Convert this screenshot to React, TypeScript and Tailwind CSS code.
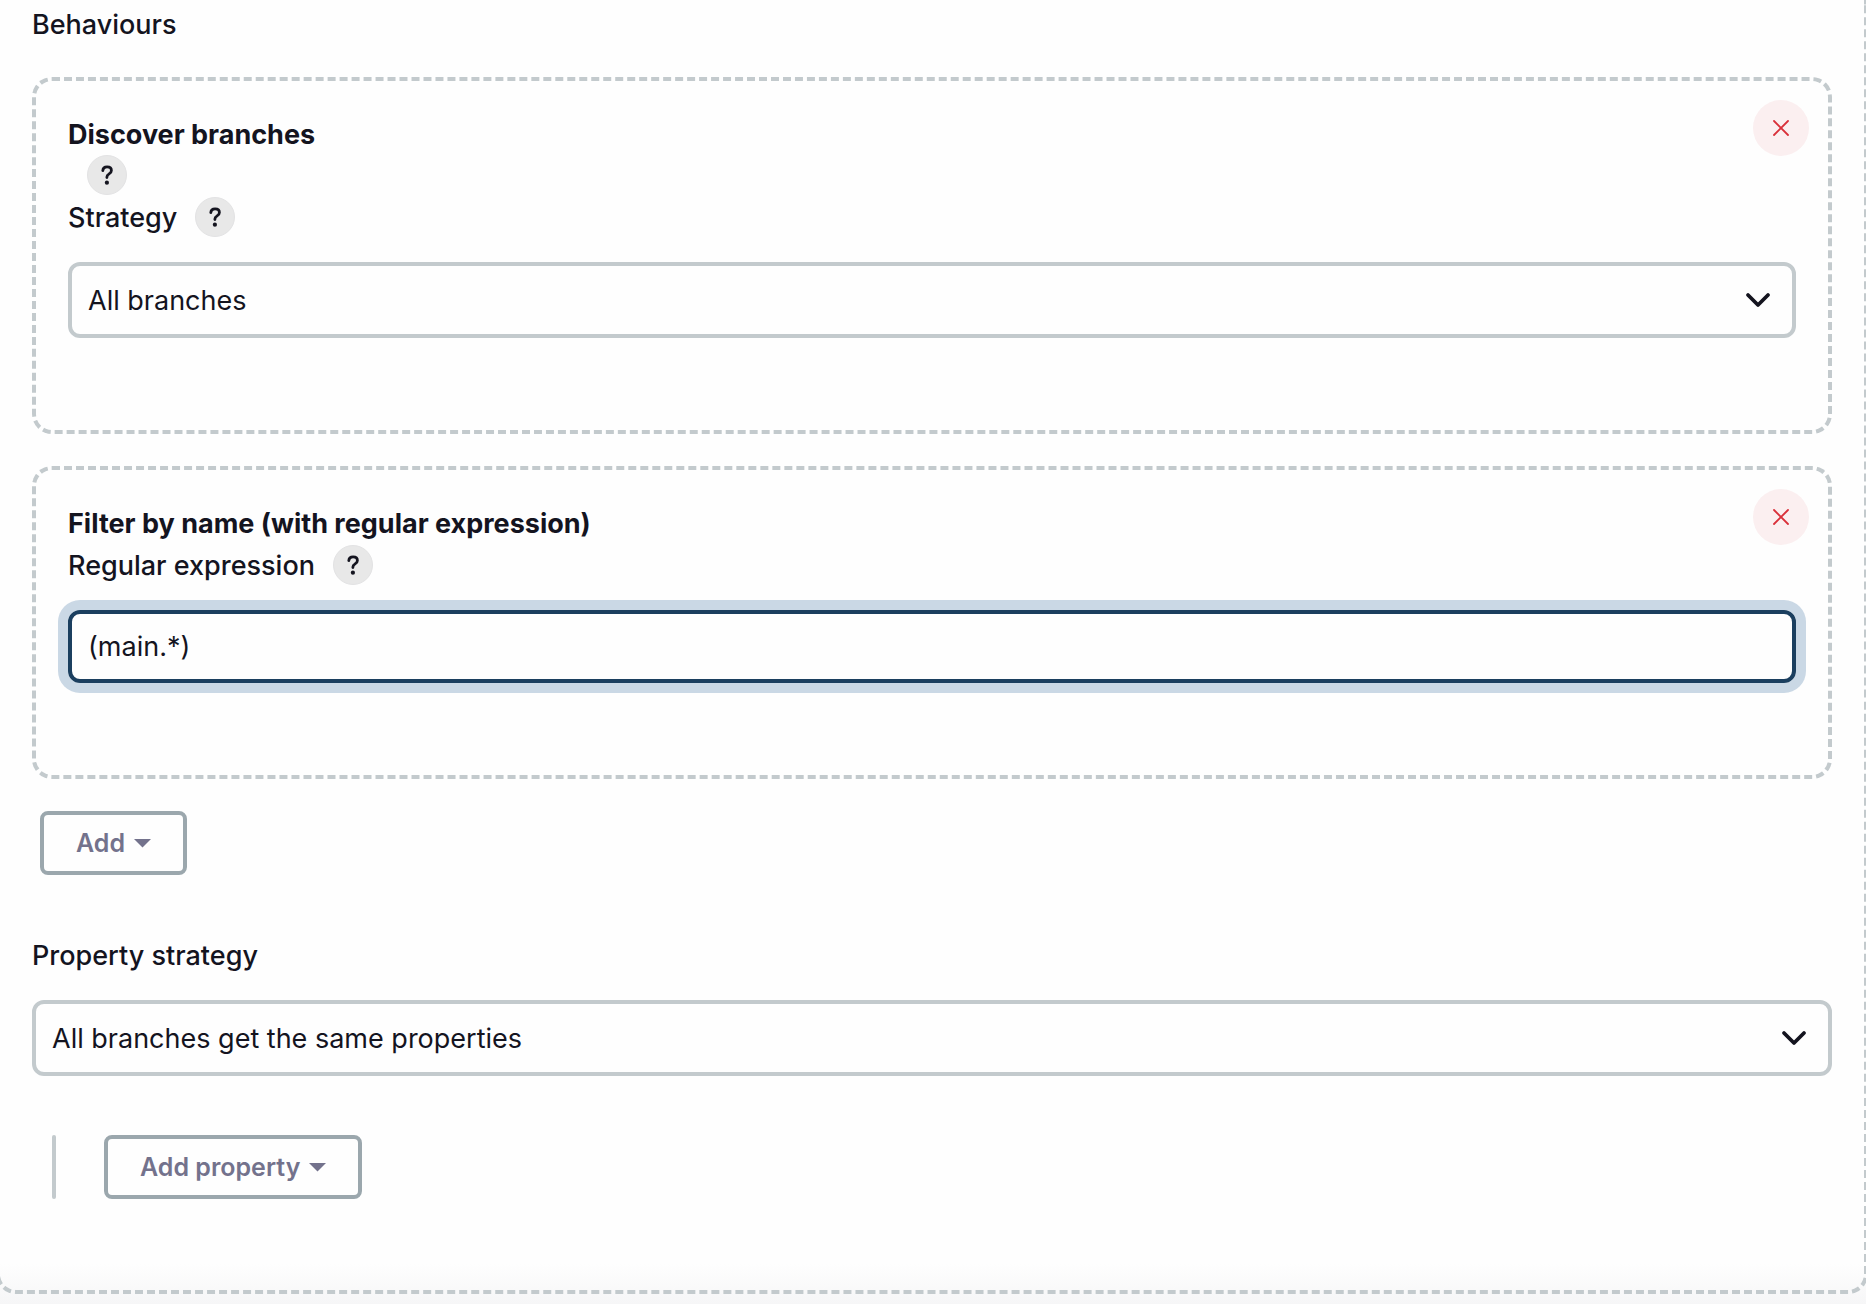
import { ReactNode, useState } from "react";

interface HelpButtonProps {
  topic: string;
}

function HelpButton({ topic }: HelpButtonProps) {
  return (
    <button
      type="button"
      aria-label={`Help for ${topic}`}
      className="flex size-10 shrink-0 items-center justify-center rounded-full border border-[#e3e3e4] bg-[#e8e8e8] text-[#14141f]"
    >
      <svg width="20" height="20" viewBox="0 0 20 20" fill="none">
        <path d="M5.800 5.600C6 3 7.600 1.800 10.100 1.800c2.500 0 4.300 1.400 4.300 3.600 0 1.700-.9 2.600-2.300 3.500-1.600 1-2.200 1.700-2.200 3v.6" stroke="currentColor" strokeWidth="2.800" strokeLinecap="round" />
        <circle cx="9.900" cy="17.700" r="2.100" fill="currentColor" />
      </svg>
    </button>
  );
}

interface LabelRowProps {
  htmlFor: string;
  children: string;
  help?: boolean;
}

function LabelRow({ htmlFor, children, help = false }: LabelRowProps) {
  return (
    <div className="flex h-[42px] items-center gap-[18px]">
      <label htmlFor={htmlFor} className="pt-0.5 font-medium">{children}</label>
      {help && <HelpButton topic={children} />}
    </div>
  );
}

interface SelectFieldProps {
  id: string;
  options: string[];
}

function SelectField({ id, options }: SelectFieldProps) {
  const [value, setValue] = useState(options[0]);

  return (
    <div className="relative mt-6">
      <select
        id={id}
        value={value}
        onChange={(e) => setValue(e.target.value)}
        className="block h-[76px] w-full appearance-none rounded-xl border-4 border-[#c3cacd] bg-transparent pt-0.5 pr-16 pl-4 outline-none"
      >
        {options.map((option) => (
          <option key={option}>{option}</option>
        ))}
      </select>
      <svg className="pointer-events-none absolute inset-y-0 right-6 my-auto" width="28" height="20" viewBox="0 0 28 20" fill="none">
        <path d="M4 5l10 10L24 5" stroke="#14141f" strokeWidth="3.800" strokeLinecap="round" strokeLinejoin="round" />
      </svg>
    </div>
  );
}

interface BehaviourProps {
  title: string;
  children: ReactNode;
}

function Behaviour({ title, children }: BehaviourProps) {
  return (
    <section className="relative mb-8 rounded-[20px] border-4 border-dashed border-[#c3cacd] px-8 pt-[34px] pb-[92px]">
      <button
        type="button"
        aria-label={`Remove ${title}`}
        className="absolute top-[19px] right-[19px] flex size-14 items-center justify-center rounded-full bg-[#fbeff0] text-[#d9303a]"
      >
        <svg width="16" height="16" viewBox="0 0 16 16" fill="none" stroke="currentColor" strokeWidth="1.800" strokeLinecap="round">
          <path d="M1 1l14 14M15 1L1 15" />
        </svg>
      </button>
      <h2 className="leading-10 font-bold">{title}</h2>
      {children}
    </section>
  );
}

interface MenuButtonProps {
  children: string;
}

function MenuButton({ children }: MenuButtonProps) {
  return (
    <button type="button" className="flex h-16 items-center gap-[9px] rounded-lg border-4 border-[#9ba7ad] px-8 text-[25px] font-semibold text-[#73728c]">
      {children}
      <svg width="17" height="9" viewBox="0 0 17 9" fill="currentColor">
        <path d="M0 0h17L8.500 8.500z" />
      </svg>
    </button>
  );
}

export default function App() {
  const [regex, setRegex] = useState("(main.*)");

  return (
    <main className="overflow-hidden bg-linear-to-t from-[#f6f6f7] to-[#fefefe] to-[40px] pb-[10px] font-['Inter',sans-serif] text-[27px] leading-[42px] text-[#14141f]">
      <div className="-mr-[2px] -ml-1 rounded-b-[20px] border-4 border-t-0 border-dashed border-[#c3cacd] px-8 pt-1 pb-[91px]">
        <h1 className="mb-[31px] font-medium">Behaviours</h1>

        <Behaviour title="Discover branches">
          <div className="mb-px pl-[19px]">
            <HelpButton topic="Discover branches" />
          </div>
          <LabelRow htmlFor="strategy" help>Strategy</LabelRow>
          <SelectField
            id="strategy"
            options={["All branches", "Exclude branches that are also filed as PRs", "Only branches that are also filed as PRs"]}
          />
        </Behaviour>

        <Behaviour title="Filter by name (with regular expression)">
          <LabelRow htmlFor="regex" help>Regular expression</LabelRow>
          <input
            type="text"
            id="regex"
            value={regex}
            onChange={(e) => setRegex(e.target.value)}
            className="mt-6 block h-[73px] w-full rounded-xl border-4 border-[#1b3f5f] bg-transparent px-4 ring-10 ring-[#cad8e5] outline-none"
          />
        </Behaviour>

        <div className="mb-[59px] flex pl-2">
          <MenuButton>Add</MenuButton>
        </div>

        <LabelRow htmlFor="property-strategy">Property strategy</LabelRow>
        <SelectField
          id="property-strategy"
          options={["All branches get the same properties", "Named branches get different properties"]}
        />

        <div className="mt-[59px] flex gap-12 pl-5">
          <div className="w-1 rounded-full bg-[#c3cacd]" />
          <MenuButton>Add property</MenuButton>
        </div>
      </div>
    </main>
  );
}
